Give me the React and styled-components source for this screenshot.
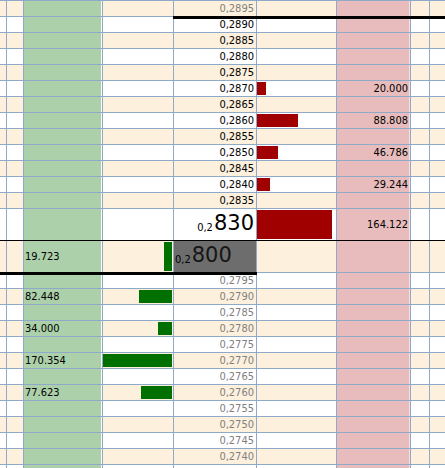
import React from 'react';
import styled, { createGlobalStyle } from 'styled-components';

const LINE = '#8eaac8';
const CREAM = '#fdf0dc';
const GREEN_COL = '#acd0a9';
const PINK_COL = '#e8bcbc';
const COLS = '7px 17px 79px 71px 83px 80px 74px 19px 1fr';

const GlobalStyle = createGlobalStyle`
    html, body {
        margin: 0;
        padding: 0;
        background: #fff;
    }
    body {
        font-family: "DejaVu Sans Condensed", "DejaVu Sans", sans-serif;
        font-size: 11px;
        color: #000;
    }
`

const Book = styled.div`
    position: relative;
    width: 445px;
    height: 468px;
    overflow: hidden;
    border-top: 1px solid ${LINE};
    box-sizing: border-box;
`

const Row = styled.div`
    display: grid;
    grid-template-columns: ${COLS};
    height: ${p => p.$h}px;
    box-sizing: border-box;
    border-bottom: 1px solid ${p => p.$dark ? '#000' : LINE};
    background: ${p => p.$alt ? CREAM : '#fff'};
`

const Cell = styled.div`
    border-right: 1px solid ${LINE};
    min-width: 0;
    display: flex;
    align-items: center;
    &:last-child {
        border-right: none;
    }
`

const BidVol = styled(Cell)`
    background: ${GREEN_COL};
    box-shadow: inset -1px 0 0 #fff;
    padding-left: 1px;
`

const AskVol = styled(Cell)`
    background: ${PINK_COL};
    box-shadow: inset -1px 0 0 #f4e0e0;
    justify-content: flex-end;
    padding-right: 2px;
`

const BarCell = styled(Cell)`
    align-items: stretch;
    justify-content: ${p => p.$side === 'bid' ? 'flex-end' : 'flex-start'};
    padding: 1px ${p => p.$side === 'bid' ? '1px' : '0'} 1px 0;
`

const Bar = styled.div`
    background: ${p => p.$side === 'bid' ? '#007000' : '#a00000'};
`

const Price = styled(Cell)`
    justify-content: ${p => p.$best === 'bid' ? 'flex-start' : 'flex-end'};
    padding: 0 2px 0 1px;
    color: ${p => p.$muted ? '#808080' : '#000'};
    background: ${p => p.$best === 'bid' ? '#6d6d6d' : 'transparent'};
    align-items: ${p => p.$best ? 'flex-end' : 'center'};
    padding-bottom: ${p => p.$best ? '6px' : '0'};
`

const Small = styled.span`
    font-size: 11px;
    margin-right: 1px;
`

const Big = styled.span`
    font-family: "DejaVu Sans", sans-serif;
    font-size: 21px;
    line-height: 1;
    color: ${p => p.$dark ? '#151515' : '#000'};
`

const Marker = styled.div`
    position: absolute;
    height: 3px;
    background: #000;
    top: ${p => p.$top}px;
    left: ${p => p.$left}px;
    width: ${p => p.$w}px;
`

const MAX = 170354;

const asks = [
    ['0,2895', 0, true],
    ['0,2890', 0], ['0,2885', 0], ['0,2880', 0], ['0,2875', 0],
    ['0,2870', 20000], ['0,2865', 0], ['0,2860', 88808], ['0,2855', 0],
    ['0,2850', 46786], ['0,2845', 0], ['0,2840', 29244], ['0,2835', 0],
];

const bids = [
    ['0,2795', 0], ['0,2790', 82448], ['0,2785', 0], ['0,2780', 34000],
    ['0,2775', 0], ['0,2770', 170354], ['0,2765', 0], ['0,2760', 77623],
    ['0,2755', 0], ['0,2750', 0], ['0,2745', 0], ['0,2740', 0], ['', 0],
];

const fmt = v => (v / 1000).toFixed(3);

const Blank = ({ n }) => Array.from({ length: n }, (_, i) => <Cell key={i} />);

const AskRow = ({ price, vol, muted, alt }) => (
    <Row $h={16} $alt={alt}>
        <Blank n={2} />
        <BidVol />
        <Cell />
        <Price $muted={muted}>{price}</Price>
        <BarCell $side="ask">
            {vol > 0 && <Bar $side="ask" style={{ width: Math.round(vol / MAX * 78) }} />}
        </BarCell>
        <AskVol>{vol > 0 ? fmt(vol) : ''}</AskVol>
        <Blank n={2} />
    </Row>
);

const BidRow = ({ price, vol, alt }) => (
    <Row $h={16} $alt={alt}>
        <Blank n={2} />
        <BidVol>{vol > 0 ? fmt(vol) : ''}</BidVol>
        <BarCell $side="bid">
            {vol > 0 && <Bar $side="bid" style={{ width: Math.round(vol / MAX * 69) }} />}
        </BarCell>
        <Price $muted>{price}</Price>
        <Cell />
        <AskVol />
        <Blank n={2} />
    </Row>
);

export default function App() {
    return (
        <>
            <GlobalStyle />
            <Book>
                {asks.map(([p, v, m], i) => (
                    <AskRow key={p} price={p} vol={v} muted={m} alt={i % 2 === 0} />
                ))}

                <Row $h={32} $dark>
                    <Blank n={2} />
                    <BidVol />
                    <Cell />
                    <Price $best="ask"><Small>0,2</Small><Big>830</Big></Price>
                    <BarCell $side="ask">
                        <Bar $side="ask" style={{ width: Math.round(164122 / MAX * 78) }} />
                    </BarCell>
                    <AskVol>164.122</AskVol>
                    <Blank n={2} />
                </Row>

                <Row $h={32} $alt>
                    <Blank n={2} />
                    <BidVol>19.723</BidVol>
                    <BarCell $side="bid">
                        <Bar $side="bid" style={{ width: Math.round(19723 / MAX * 69) }} />
                    </BarCell>
                    <Price $best="bid"><Small>0,2</Small><Big $dark>800</Big></Price>
                    <Cell />
                    <AskVol />
                    <Blank n={2} />
                </Row>

                {bids.map(([p, v], i) => (
                    <BidRow key={p || i} price={p} vol={v} alt={i % 2 === 1} />
                ))}

                <Marker $top={15} $left={173} $w={272} />
                <Marker $top={271} $left={0} $w={257} />
            </Book>
        </>
    );
}
